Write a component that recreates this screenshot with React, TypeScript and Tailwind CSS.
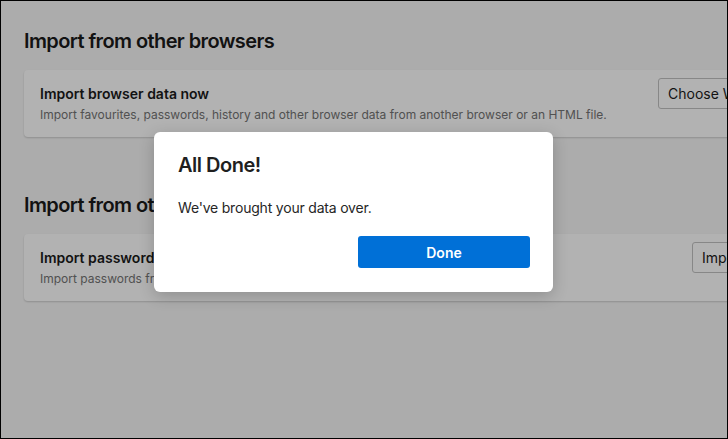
import React from "react";

type Row = {
  title: string;
  desc: string;
  action: string;
  actionWidth: string;
};

const sections: { heading: string; row: Row }[] = [
  {
    heading: "Import from other browsers",
    row: {
      title: "Import browser data now",
      desc: "Import favourites, passwords, history and other browser data from another browser or an HTML file.",
      action: "Choose What to Import",
      actionWidth: "w-[166px]",
    },
  },
  {
    heading: "Import from other password managers",
    row: {
      title: "Import passwords from a password manager",
      desc: "Import passwords from a file exported by another password manager.",
      action: "Import passwords",
      actionWidth: "w-[132px]",
    },
  },
];

function SettingsRow({ row }: { row: Row }) {
  return (
    <div className="flex h-[67px] w-[816px] items-center justify-between rounded-[4px] bg-white px-4 shadow-[0_1px_2px_rgba(0,0,0,0.18)]">
      <div className="flex flex-col gap-[3px]">
        <span className="text-[14px] font-semibold leading-5 text-[#1b1b1b]">{row.title}</span>
        <span className="text-[12px] leading-4 text-[#747474]">{row.desc}</span>
      </div>
      <button
        className={`${row.actionWidth} h-[31px] self-start mt-2 shrink-0 whitespace-nowrap rounded-[3px] border border-[#c2c2c2] bg-white px-[9px] text-left text-[14px] text-[#1b1b1b]`}
      >
        {row.action}
      </button>
    </div>
  );
}

export default function App() {
  return (
    <div
      className="relative h-[439px] w-[728px] overflow-hidden border border-black bg-[#f7f7f7]"
      style={{ fontFamily: "Inter, 'Liberation Sans', sans-serif" }}
    >
      {/* ---- SETTINGS PAGE ---- */}
      <div className="flex flex-col pl-[23px] pt-[26px]">
        {sections.map((s, i) => (
          <div key={s.heading} className={i > 0 ? "mt-[54px]" : ""}>
            <h2 className="mb-[15px] whitespace-nowrap text-[20px] font-semibold leading-7 tracking-[-0.6px] text-[#1b1b1b]">
              {s.heading}
            </h2>
            <SettingsRow row={s.row} />
          </div>
        ))}
      </div>

      {/* ---- OVERLAY ---- */}
      <div className="absolute inset-0 bg-black/30" />

      {/* ---- DIALOG ---- */}
      <div
        className="absolute left-[153px] top-[131px] flex h-[160px] w-[399px] flex-col rounded-[6px] bg-white pl-6 pr-[23px] pt-[19px] shadow-[0_4px_16px_rgba(0,0,0,0.2)]"
        role="dialog"
        aria-modal="true"
      >
        <h3 className="text-[20px] font-semibold leading-7 tracking-[-0.5px] text-[#1f1f1f]">All Done!</h3>
        <p className="mt-[19px] text-[14px] leading-5 tracking-[-0.2px] text-[#262626]">
          We've brought your data over.
        </p>
        <div className="mt-[18px] flex justify-end">
          <button className="h-8 w-[172px] rounded-[3px] bg-[#0070d7] text-[14px] font-semibold text-white">
            Done
          </button>
        </div>
      </div>
    </div>
  );
}
